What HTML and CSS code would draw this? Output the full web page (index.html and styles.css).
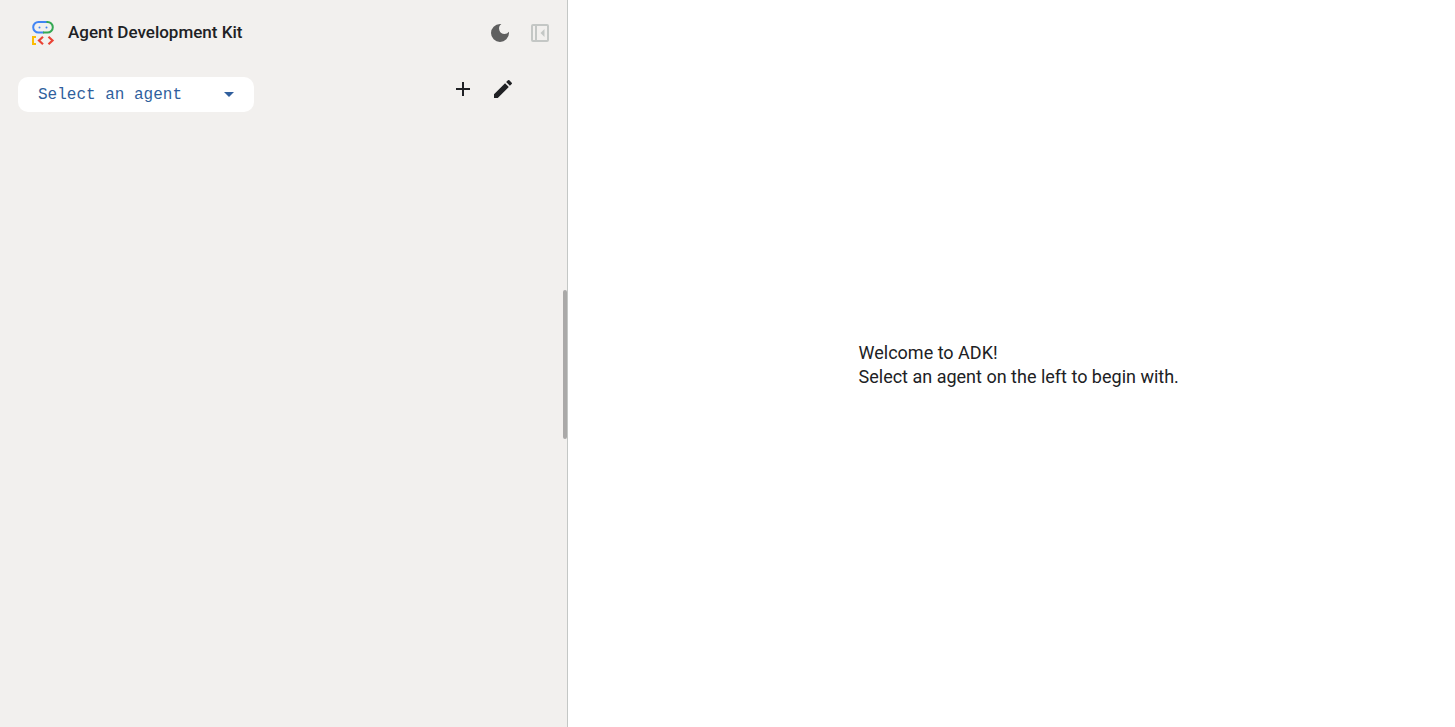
FILE: index.html
```html
<!DOCTYPE html>
<html lang="en">
<head>
<meta charset="utf-8">
<title>Agent Development Kit</title>
<link rel="stylesheet" href="styles.css">
</head>
<body>
<div class="app">
  <aside class="side">
    <header class="header">
      <svg class="logo" viewBox="0 0 24 26" fill="none" stroke-width="2" aria-hidden="true">
        <path stroke="#4285f4" d="M16 2H7.500a5.300 5.300 0 0 0 0 10.600H13"/>
        <path stroke="#34a853" d="M15.500 2h1a5.300 5.300 0 0 1 0 10.600H12"/>
        <circle cx="8.500" cy="7.500" r="1" fill="#4285f4"/>
        <circle cx="15.500" cy="7.500" r="1" fill="#4285f4"/>
        <path stroke="#fbbc04" d="M5 17H2v7h3"/>
        <path stroke="#ea4335" stroke-width="2.200" d="M12 16.800l-4 3.700 4 3.700M17.500 16.800l4 3.700-4 3.700"/>
      </svg>
      <h1 class="title">Agent Development Kit</h1>
      <button class="icon-button theme" type="button" aria-label="Toggle theme">
        <svg viewBox="0 0 24 24"><path d="M12 3a9 9 0 1 0 9 9c0-.46-.04-.92-.1-1.360a5.389 5.389 0 0 1-4.400 2.260 5.403 5.403 0 0 1-3.140-9.800c-.44-.06-.9-.1-1.360-.1z"/></svg>
      </button>
      <button class="icon-button collapse" type="button" aria-label="Collapse panel">
        <svg viewBox="0 0 24 24"><path fill-rule="evenodd" d="M5 3h14a2 2 0 0 1 2 2v14a2 2 0 0 1-2 2H5a2 2 0 0 1-2-2V5a2 2 0 0 1 2-2zM5 5v14h2V5zM9 5v14h10V5zM16.500 8v8l-4-4z"/></svg>
      </button>
    </header>
    <div class="toolbar">
      <div class="picker">
        <select class="agent-select" aria-label="Agent"><option>Select an agent</option></select>
        <svg class="arrow" viewBox="0 0 10 5" aria-hidden="true"><path d="M0 0h10L5 5z"/></svg>
      </div>
      <div class="actions">
        <button class="icon-button" type="button" aria-label="Add agent">
          <svg viewBox="0 0 24 24"><path d="M19 13h-6v6h-2v-6H5v-2h6V5h2v6h6z"/></svg>
        </button>
        <button class="icon-button" type="button" aria-label="Edit agent">
          <svg viewBox="0 0 24 24"><path d="M3 17.250V21h3.750L17.810 9.940l-3.750-3.750zM20.710 7.040a1 1 0 0 0 0-1.410l-2.340-2.340a1 1 0 0 0-1.410 0l-1.830 1.830 3.750 3.750z"/></svg>
        </button>
      </div>
    </div>
    <div class="resizer"></div>
  </aside>
  <main class="main">
    <p class="welcome">Welcome to ADK!<br>Select an agent on the left to begin with.</p>
  </main>
</div>
</body>
</html>
```
FILE: styles.css
```css
* { box-sizing: border-box; }
body { margin: 0; color: #202124; font-family: Roboto, "Liberation Sans", sans-serif; }
.app { display: flex; min-height: 100vh; background: #fff; }
.side { position: relative; flex: 0 0 calc(39% + 1px); background: #f2f0ee; border-right: 1px solid #c4c7c5; }
.header { display: flex; align-items: center; height: 64px; padding: 1px 15px 0 31px; }
.logo { width: 24px; height: 26px; margin-right: 13px; }
.title { margin: 0 auto 0 0; padding-bottom: 2px; font-size: 17px; font-weight: 500; line-height: 24px; }
.icon-button { display: flex; width: 24px; height: 24px; padding: 0; border: 0; background: none; color: #202124; cursor: pointer; }
.icon-button svg { width: 24px; height: 24px; fill: currentColor; }
.theme { margin-right: 16px; color: #5f5f5f; }
.collapse { color: #c4c7c5; }
.toolbar { display: flex; align-items: flex-start; justify-content: space-between; padding: 13px 52px 0 18px; }
.picker { position: relative; width: 236px; }
.agent-select { display: block; width: 100%; height: 35px; padding: 0 40px 0 20px; border: 0; border-radius: 10px; background: #fff; color: #305f9d; font: 16px "Liberation Mono", monospace; appearance: none; }
.arrow { position: absolute; top: 15px; right: 20px; width: 10px; height: 5px; fill: #305f9d; pointer-events: none; }
.actions { display: flex; gap: 16px; }
.resizer { position: absolute; top: calc(40% - 1px); right: 0; width: 4px; height: 149px; border-radius: 4px; background: #aaa9a8; }
.main { flex: 1; display: flex; align-items: center; justify-content: center; padding: 2px 0 0 14px; }
.welcome { margin: 0; font-size: 18px; line-height: 24px; }
```
